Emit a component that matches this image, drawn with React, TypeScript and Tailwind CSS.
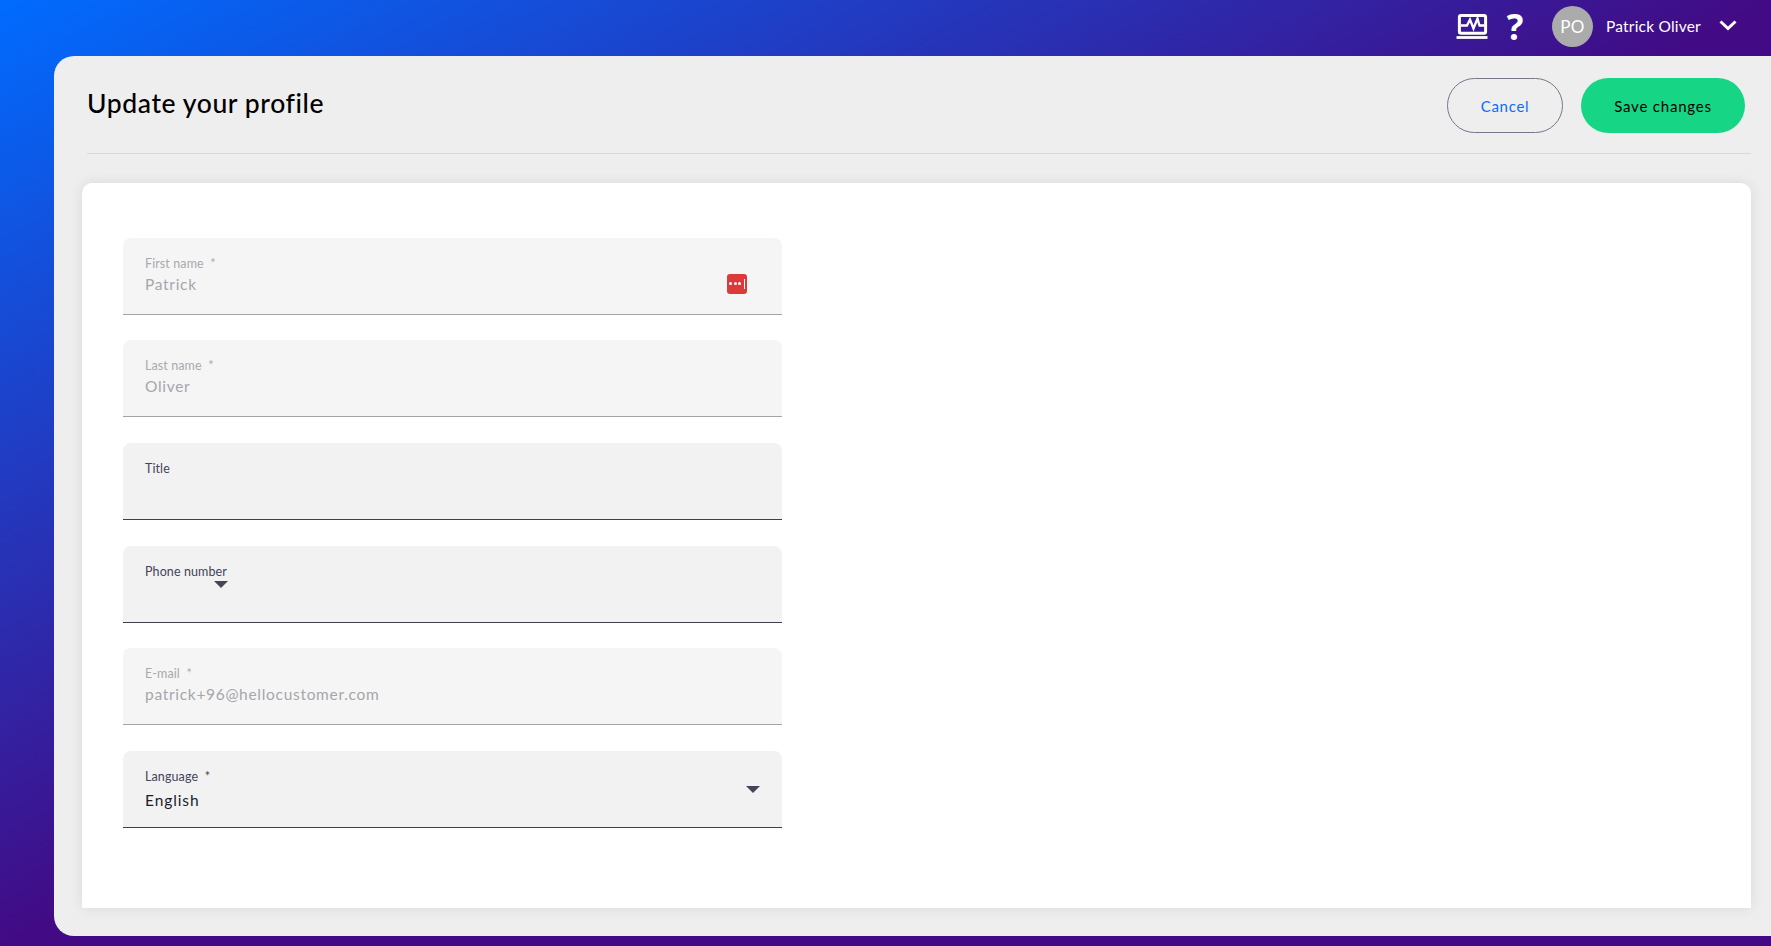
import React from "react";

const font = "font-['Lato','Open_Sans',sans-serif]";

function Caret({ className }: { className?: string }) {
  return (
    <svg className={className} width="14" height="7" viewBox="0 0 14 7" fill="#44445a">
      <path d="M0 0h14L7 7z" />
    </svg>
  );
}

function Field({
  label,
  value,
  disabled,
  children,
}: {
  label: string;
  value?: string;
  disabled?: boolean;
  children?: React.ReactNode;
}) {
  return (
    <div
      className={`relative h-[77px] rounded-t-[8px] border-b px-[22px] pt-[18px] ${
        disabled ? "bg-[#f5f5f5] border-[#a3a3a8]" : "bg-[#f2f2f2] border-[#3f3f50]"
      }`}
    >
      <div
        className={`text-[12.5px] leading-[16px] tracking-[0.1px] ${
          disabled ? "text-[#a9a9ae]" : "text-[#44445a]"
        }`}
      >
        {label}
      </div>
      {value && (
        <div
          className={`text-[15.5px] leading-[22px] ${
            disabled
              ? "mt-[1px] tracking-[0.7px] text-[#a6a6ab]"
              : "mt-[4px] tracking-[0.9px] text-[#1c1c2b]"
          }`}
        >
          {value}
        </div>
      )}
      {children}
    </div>
  );
}

export default function App() {
  return (
    <div
      className={`${font} flex h-[946px] w-full flex-col overflow-hidden bg-[linear-gradient(to_bottom_right,#006cff,#420b85_50%)]`}
    >
      <header className="flex h-[56px] shrink-0 items-center justify-end text-white">
        <svg width="32" height="26" viewBox="0 0 32 26" fill="none" stroke="white" className="mr-[18px] mt-[-4px]">
          <rect x="3.4" y="2.4" width="26.2" height="17.8" rx="1.5" strokeWidth="3" />
          <path d="M5 12.5h6l3-6 3.5 9 4-10 2 7h5" strokeWidth="2.3" />
          <path d="M0.5 24.5h31" strokeWidth="2.8" />
        </svg>
        <span className="mr-[28px] mt-[-3px] w-[18px] text-center font-['Open_Sans',sans-serif] text-[35px] font-bold leading-none">?</span>
        <div className="mt-[-3px] flex h-[41px] w-[41px] items-center justify-center rounded-full bg-[#ababab] text-[17px] tracking-[0.3px]">
          PO
        </div>
        <span className="ml-[13px] mt-[-2px] w-[95px] text-[15.5px] tracking-[0.2px] whitespace-nowrap">Patrick Oliver</span>
        <svg width="18" height="11" viewBox="0 0 18 11" fill="none" stroke="white" strokeWidth="3" className="ml-[18px] mr-[34px] mt-[-6px]">
          <path d="M1.5 1.5L9 8.5l7.5-7" />
        </svg>
      </header>

      <main className="ml-[54px] flex h-[880px] shrink-0 flex-col rounded-l-[20px] bg-[#eeeeee] pl-[28px] pr-[20px]">
        <div className="ml-[5px] flex h-[98px] shrink-0 items-start justify-between border-b border-[#d9d9d9] pr-[6px] pt-[22px]">
          <h1 className="mt-[8px] text-[26.5px] font-medium leading-[34px] tracking-[0.6px] text-black">
            Update your profile
          </h1>
          <div className="flex gap-[18px]">
            <button className="h-[55px] w-[116px] rounded-full border border-[#77778a] pt-[1px] text-[15px] tracking-[0.7px] text-[#0a6cff]">
              Cancel
            </button>
            <button className="h-[55px] w-[164px] rounded-full bg-[#16d685] pt-[1px] text-[15px] tracking-[0.8px] text-black">
              Save changes
            </button>
          </div>
        </div>

        <section className="mt-[29px] flex h-[725px] shrink-0 flex-col rounded-t-[10px] bg-white pl-[41px] pt-[54.7px] shadow-[0_0_14px_rgba(0,0,0,0.09)]">
          <div className="flex w-[659px] flex-col gap-[25.7px]">
            <Field label={"First name\u00a0\u00a0*"} value="Patrick" disabled>
              <div className="absolute left-[604px] top-[36px] flex h-[20px] w-[20px] items-center justify-center gap-[1.5px] rounded-[3px] bg-[#dc3a3a]">
                <span className="h-[3px] w-[3px] rounded-full bg-white" />
                <span className="h-[3px] w-[3px] rounded-full bg-white" />
                <span className="h-[3px] w-[3px] rounded-full bg-white" />
                <span className="ml-[1px] h-[10px] w-[1px] bg-white" />
              </div>
            </Field>
            <Field label={"Last name\u00a0\u00a0*"} value="Oliver" disabled />
            <Field label="Title" />
            <Field label="Phone number">
              <Caret className="absolute left-[91px] top-[35px]" />
            </Field>
            <Field label={"E-mail\u00a0\u00a0*"} value="patrick+96@hellocustomer.com" disabled />
            <Field label={"Language\u00a0\u00a0*"} value="English">
              <Caret className="absolute left-[623px] top-[35px]" />
            </Field>
          </div>
        </section>
      </main>
    </div>
  );
}
